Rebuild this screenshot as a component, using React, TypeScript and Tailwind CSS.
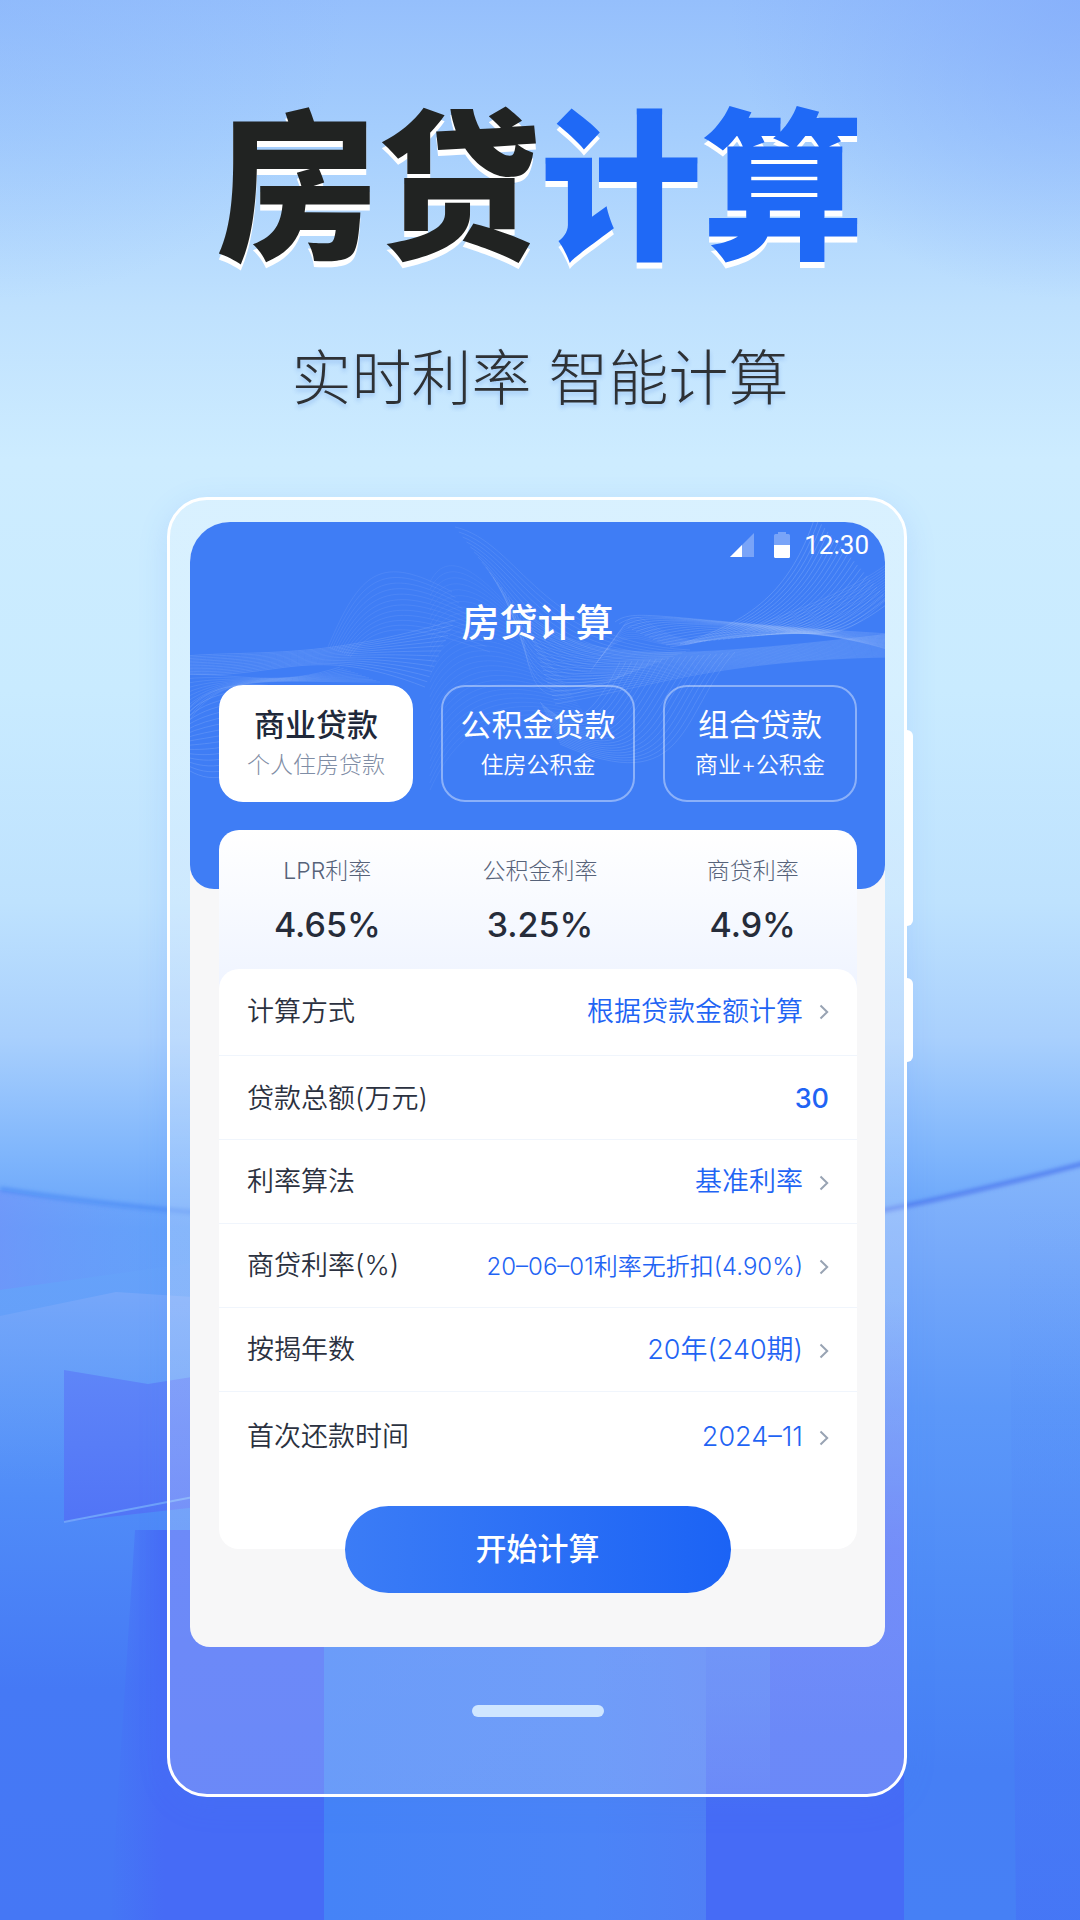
import React, { useState } from 'react';

type Tab = { title: string; note: string };
type Rate = { label: string; value: string };
type Option = { label: string; value: string; small?: boolean };

const tabs: Tab[] = [
  { title: '商业贷款', note: '个人住房贷款' },
  { title: '公积金贷款', note: '住房公积金' },
  { title: '组合贷款', note: '商业+公积金' },
];

const rates: Rate[] = [
  { label: 'LPR利率', value: '4.65%' },
  { label: '公积金利率', value: '3.25%' },
  { label: '商贷利率', value: '4.9%' },
];

const options: Option[] = [
  { label: '利率算法', value: '基准利率' },
  { label: '商贷利率(%)', value: '20–06–01利率无折扣(4.90%)', small: true },
  { label: '按揭年数', value: '20年(240期)' },
];

// Each band is drawn by sweeping from the first cubic curve to the last one
type Band = { from: number[]; to: number[]; count: number; opacity: number };

const bands: Band[] = [
  { from: [-5, 134, 70, 128, 130, 138, 265, 98], to: [-5, 152, 90, 158, 120, 120, 235, 165], count: 14, opacity: 0.18 },
  { from: [-5, 152, 50, 152, 90, 165, 150, 145], to: [-5, 205, 30, 150, 60, 160, 190, 160], count: 12, opacity: 0.13 },
  { from: [-5, 190, 20, 160, 60, 160, 90, 165], to: [-5, 246, 20, 262, 40, 260, 90, 225], count: 16, opacity: 0.18 },
  { from: [138, 125, 170, 50, 190, 30, 262, 70], to: [160, 135, 190, 90, 240, 110, 300, 130], count: 12, opacity: 0.1 },
  { from: [240, 60, 260, 20, 300, 60, 340, 110], to: [240, 268, 270, 200, 320, 180, 400, 200], count: 30, opacity: 0.08 },
  { from: [265, 5, 330, 20, 350, 120, 500, 128], to: [330, 90, 340, 180, 350, 190, 430, 155], count: 18, opacity: 0.13 },
  { from: [330, 85, 390, 140, 460, 140, 700, 112], to: [365, 182, 440, 170, 520, 138, 700, 135], count: 24, opacity: 0.16 },
  { from: [425, 100, 445, 85, 470, 98, 700, 112], to: [480, 125, 530, 118, 590, 95, 700, 128], count: 14, opacity: 0.18 },
  { from: [430, 110, 450, 70, 460, 125, 520, 118], to: [400, 150, 440, 90, 450, 130, 500, 122], count: 10, opacity: 0.1 },
  { from: [625, -5, 600, 70, 560, 100, 490, 122], to: [700, 80, 660, 110, 640, 115, 600, 110], count: 24, opacity: 0.22 },
  { from: [700, 40, 660, 70, 600, 90, 550, 110], to: [700, 75, 680, 90, 660, 115, 630, 110], count: 14, opacity: 0.14 },
  { from: [545, 130, 490, 190, 500, 280, 370, 222], to: [430, 140, 400, 200, 380, 210, 350, 180], count: 20, opacity: 0.16 },
];

const sweep = (band: Band) =>
  Array.from({ length: band.count }, (_, i) => {
    const t = i / (band.count - 1);
    const p = band.from.map((v, k) => (v + (band.to[k] - v) * t).toFixed(1));
    return `M${p[0]} ${p[1]}C${p[2]} ${p[3]} ${p[4]} ${p[5]} ${p[6]} ${p[7]}`;
  }).join('');

const Waves: React.FC = () => (
  <svg className="absolute inset-x-0 top-0 w-full" viewBox="0 0 695 367" fill="none" stroke="#cfe3ff" aria-hidden="true">
    {bands.map((band, i) => (
      <path key={i} d={sweep(band)} strokeOpacity={band.opacity} strokeWidth="0.9" />
    ))}
  </svg>
);

// Sky and blocks behind the phone
const Backdrop: React.FC = () => (
  <svg className="absolute inset-0 h-full w-full" viewBox="0 0 1080 1920" preserveAspectRatio="none" aria-hidden="true">
    <defs>
      <linearGradient id="sky" x1="0" y1="0" x2="0" y2="1">
        <stop offset="0" stopColor="#95bffc" />
        <stop offset="0.07" stopColor="#a5cefd" />
        <stop offset="0.16" stopColor="#bfe1fe" />
        <stop offset="0.24" stopColor="#cdecff" />
        <stop offset="0.36" stopColor="#c9ebff" />
        <stop offset="0.47" stopColor="#bee2fe" />
        <stop offset="0.54" stopColor="#a9d0fd" />
        <stop offset="0.6" stopColor="#80b6fc" />
        <stop offset="0.64" stopColor="#66a3fa" />
        <stop offset="0.7" stopColor="#659ff9" />
        <stop offset="0.78" stopColor="#508cf8" />
        <stop offset="0.88" stopColor="#4579f5" />
        <stop offset="1" stopColor="#4577f5" />
      </linearGradient>
      <radialGradient id="cornerRight" cx="1" cy="0" r="0.5">
        <stop offset="0" stopColor="#82abfb" stopOpacity="0.7" />
        <stop offset="1" stopColor="#82abfb" stopOpacity="0" />
      </radialGradient>
      <radialGradient id="cornerLeft" cx="0" cy="0" r="0.5">
        <stop offset="0" stopColor="#88b4fb" stopOpacity="0.4" />
        <stop offset="1" stopColor="#88b4fb" stopOpacity="0" />
      </radialGradient>
      <linearGradient id="violet" x1="0" y1="0" x2="1" y2="0">
        <stop offset="0" stopColor="#6f93f9" />
        <stop offset="1" stopColor="#5fa0fa" stopOpacity="0.3" />
      </linearGradient>
      <linearGradient id="slab" x1="0" y1="0" x2="0" y2="1">
        <stop offset="0" stopColor="#76a7fa" />
        <stop offset="1" stopColor="#5c98f8" stopOpacity="0" />
      </linearGradient>
      <linearGradient id="block" x1="0" y1="0" x2="0" y2="1">
        <stop offset="0" stopColor="#5f86f8" />
        <stop offset="1" stopColor="#5174f6" />
      </linearGradient>
      <linearGradient id="panel" x1="0" y1="0" x2="1" y2="0">
        <stop offset="0" stopColor="#4583f7" />
        <stop offset="0.7" stopColor="#4b84f7" />
        <stop offset="1" stopColor="#4f7ff5" />
      </linearGradient>
      <linearGradient id="rightWall" x1="0" y1="0" x2="0" y2="1">
        <stop offset="0" stopColor="#84b5fb" />
        <stop offset="0.12" stopColor="#76a9fa" />
        <stop offset="0.32" stopColor="#5c98f9" />
        <stop offset="0.55" stopColor="#4f8cf7" />
        <stop offset="0.8" stopColor="#467ff5" />
        <stop offset="1" stopColor="#4680f5" />
      </linearGradient>
      <linearGradient id="wallShade" x1="0" y1="0" x2="0" y2="1">
        <stop offset="0" stopColor="#4a74f6" stopOpacity="0" />
        <stop offset="0.5" stopColor="#4a74f6" stopOpacity="0.12" />
        <stop offset="1" stopColor="#4570f6" stopOpacity="0.6" />
      </linearGradient>
      <linearGradient id="deep" x1="0" y1="0" x2="1" y2="0">
        <stop offset="0" stopColor="#466bf6" stopOpacity="0" />
        <stop offset="0.25" stopColor="#466bf6" />
        <stop offset="1" stopColor="#466bf6" />
      </linearGradient>
      <linearGradient id="ledge" x1="0" y1="0" x2="0" y2="1">
        <stop offset="0" stopColor="#4f83f6" />
        <stop offset="0.45" stopColor="#4b78f5" />
        <stop offset="0.75" stopColor="#466bf6" />
      </linearGradient>
      <linearGradient id="rise" x1="0" y1="0" x2="0" y2="1">
        <stop offset="0" stopColor="#5c7cf8" stopOpacity="0" />
        <stop offset="0.4" stopColor="#4f70f7" />
        <stop offset="0.7" stopColor="#466bf6" />
      </linearGradient>
      <filter id="soft" x="-0.1" y="-0.5" width="1.2" height="2"><feGaussianBlur stdDeviation="2" /></filter>
    </defs>
    <rect width="1080" height="1920" fill="url(#sky)" />
    <rect x="380" width="700" height="600" fill="url(#cornerRight)" />
    <rect width="700" height="600" fill="url(#cornerLeft)" />
    <path d="M0 1190Q100 1206 200 1217L200 1262L0 1290Z" fill="url(#violet)" opacity="0.7" />
    <path d="M0 1189Q90 1203 200 1213" stroke="#4f8df5" strokeWidth="4" fill="none" filter="url(#soft)" />
    <path d="M0 1316L116 1292L240 1300V1480H0Z" fill="url(#slab)" />
    <path d="M64 1370L148 1384L260 1366V1500L64 1522Z" fill="url(#block)" />
    <path d="M64 1522L240 1488" stroke="#6fa2fa" strokeWidth="2" />
    <path d="M880 1212L1080 1166V1920H880Z" fill="url(#rightWall)" />
    <path d="M1009 1210L1080 1200V1920H1016Z" fill="url(#wallShade)" />
    <path d="M860 1215Q960 1196 1090 1162" stroke="#4e78ee" strokeWidth="4" fill="none" filter="url(#soft)" />
    <path d="M135 1530L110 1920H326V1530Z" fill="url(#deep)" />
    <rect x="324" y="1500" width="384" height="420" fill="url(#panel)" />
    <rect x="706" y="1500" width="66" height="420" fill="url(#ledge)" />
    <rect x="770" y="1300" width="134" height="620" fill="url(#rise)" />
  </svg>
);

const Chevron: React.FC = () => (
  <svg className="h-4 w-[10px] shrink-0" viewBox="0 0 10 16" fill="none" stroke="#98a3b3" strokeWidth="2" aria-hidden="true">
    <path d="M1.5 1.5L8.2 8L1.5 14.5" />
  </svg>
);

const StatusBar: React.FC = () => (
  <div className="flex h-[46px] items-center justify-end pr-4 text-white">
    <svg className="mr-5 h-6 w-6" viewBox="0 0 24 24" aria-hidden="true">
      <path d="M24 0V24H0Z" fill="#fff" fillOpacity="0.3" />
      <path d="M12 12V24H0Z" fill="#fff" />
    </svg>
    <svg className="mr-[14px] h-[26px] w-4" viewBox="0 0 16 26" aria-hidden="true">
      <path d="M4 0H12V2H14.5Q16 2 16 3.5V13H0V3.5Q0 2 1.5 2H4Z" fill="#fff" fillOpacity="0.3" />
      <path d="M0 13H16V24.5Q16 26 14.5 26H1.5Q0 26 0 24.5Z" fill="#fff" />
    </svg>
    <span className="font-[Roboto,sans-serif] text-[26px] leading-8">12:30</span>
  </div>
);

const OptionRow: React.FC<{ option: Option; className: string }> = ({ option, className }) => (
  <button type="button" className={`flex w-full items-center justify-between border-[#f0f5fc] px-7 ${className}`}>
    <span className="text-[#2b3140]">{option.label}</span>
    <span className="flex items-center gap-4 text-[#1f64f4]">
      <span className={option.small ? 'text-[24px]' : ''}>{option.value}</span>
      <Chevron />
    </span>
  </button>
);

const App: React.FC = () => {
  const [active, setActive] = useState(0);
  const [amount, setAmount] = useState('30');

  return (
    <div className="relative min-h-screen overflow-hidden font-[Inter,'Noto_Sans_CJK_SC',sans-serif]">
      <Backdrop />

      <main className="relative flex flex-col items-center px-4 pt-[106px] pb-[123px]">
        <h1 className="text-[162px] leading-[164px] font-black whitespace-nowrap text-[#212322] [text-shadow:0_6px_0_#fff]">
          房贷<span className="text-[#1f69f6]">计算</span>
        </h1>
        <p className="mt-[72px] text-[60px] leading-[72px] font-light whitespace-nowrap text-[#2e3135] [text-shadow:0_3px_4px_rgba(60,120,220,0.3)]">
          实时利率 智能计算
        </p>

        <div className="mt-[83px] flex w-full max-w-[746px]">
          <div className="min-w-0 flex-1 rounded-[40px] border-[3px] border-white bg-linear-to-b from-white/25 to-white/20 pt-[22px] pr-[19px] pl-5 shadow-[0_8px_30px_rgba(70,130,250,0.15)]">
            <section className="overflow-hidden rounded-t-[40px] rounded-b-[20px] bg-[#f7f7f8] pb-[54px]">
              <header className="relative overflow-hidden rounded-b-3xl bg-[#3f7df5] pb-[87px]">
                <Waves />
                <div className="relative">
                  <StatusBar />
                  <h2 className="mt-[26px] text-center text-[38px] leading-[56px] font-medium text-white">房贷计算</h2>
                  <div role="tablist" className="mt-[35px] mr-7 ml-[29px] grid grid-cols-3 gap-7">
                    {tabs.map((tab, i) => (
                      <button
                        key={tab.title}
                        type="button"
                        role="tab"
                        aria-selected={i === active}
                        onClick={() => setActive(i)}
                        className={`flex h-[117px] flex-col items-center rounded-3xl border-2 pt-[18px] whitespace-nowrap ${
                          i === active ? 'border-white bg-white' : 'border-white/40 text-white'
                        }`}
                      >
                        <span className={`text-[31px] leading-10 ${i === active ? 'font-medium text-[#20283a]' : ''}`}>{tab.title}</span>
                        <span className={`text-[23px] leading-10 ${i === active ? 'font-light text-[#7f8da5]' : 'font-[350]'}`}>{tab.note}</span>
                      </button>
                    ))}
                  </div>
                </div>
              </header>

              <div className="relative -mt-[59px] mr-7 ml-[29px]">
                <dl className="grid grid-cols-3 rounded-t-[20px] bg-linear-to-b from-white to-[#eff4ff] pt-6 pb-[42px] text-center">
                  {rates.map((rate) => (
                    <div key={rate.label} className="pl-1">
                      <dt className="text-[23px] leading-[34px] font-light text-[#566279]">{rate.label}</dt>
                      <dd className="mt-[15px] text-[34px] leading-[44px] font-medium text-[#262c3a]">{rate.value}</dd>
                    </div>
                  ))}
                </dl>

                <div className="-mt-5 rounded-[20px] bg-white pb-[70px] text-[27px] font-[350]">
                  <OptionRow option={{ label: '计算方式', value: '根据贷款金额计算' }} className="h-[87px] border-b" />
                  <div className="flex h-[84px] items-center justify-between border-b border-[#f0f5fc] px-7 pt-1">
                    <label htmlFor="amount" className="text-[#2b3140]">贷款总额(万元)</label>
                    <input
                      id="amount"
                      inputMode="numeric"
                      value={amount}
                      onChange={(e) => setAmount(e.target.value)}
                      className="w-40 bg-transparent text-right font-medium text-[#1f64f4] outline-none"
                    />
                  </div>
                  {options.map((option) => (
                    <OptionRow key={option.label} option={option} className="h-[84px] border-b pt-[2px]" />
                  ))}
                  <OptionRow option={{ label: '首次还款时间', value: '2024–11' }} className="h-[87px] pt-1" />
                </div>
              </div>

              <div className="relative -mt-[43px] flex justify-center">
                <button
                  type="button"
                  className="h-[87px] w-[386px] rounded-full bg-linear-to-r from-[#3b7cf6] to-[#1b63f5] text-[31px] font-medium text-white"
                >
                  开始计算
                </button>
              </div>
            </section>
            <div className="mx-auto mt-[58px] mb-[77px] h-3 w-[132px] rounded-full bg-[#cfe6ff]" />
          </div>

          <div className="flex w-[6px] flex-col gap-[52px] pt-[233px]">
            <div className="h-[196px] rounded-r-md bg-white" />
            <div className="h-[84px] rounded-r-md bg-white" />
          </div>
        </div>
      </main>
    </div>
  );
};

export default App;
